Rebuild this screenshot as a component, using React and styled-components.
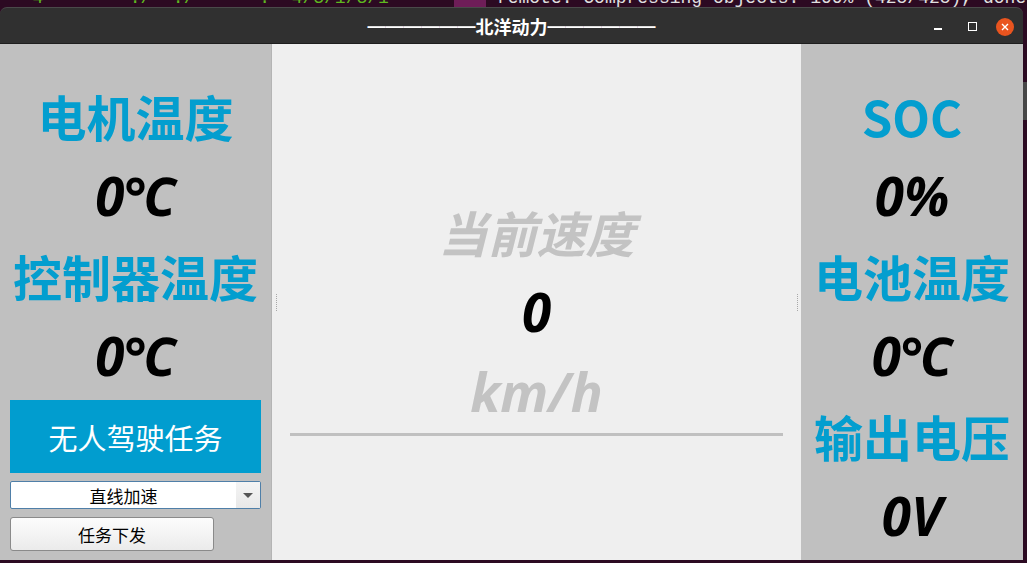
import React from "react";
import styled, { createGlobalStyle } from "styled-components";

const GlobalStyle = createGlobalStyle`
  html, body {
    margin: 0;
    padding: 0;
    background: #2c0a22;
    overflow: hidden;
  }
  * { box-sizing: border-box; }
`;

const BLUE = "#039ecf";
const CJK = `"Noto Sans CJK SC", "Noto Sans", sans-serif`;
const NUM = `"Noto Sans", "Noto Sans CJK SC", sans-serif`;

const Desktop = styled.div`
  width: 1027px;
  height: 563px;
  background: #2c0a22;
  display: flex;
  flex-direction: column;
  overflow: hidden;
`;

const TerminalLine = styled.div`
  height: 7px;
  overflow: hidden;
  display: flex;
  align-items: flex-end;
  font-family: "Liberation Mono", monospace;
  font-size: 18px;
  line-height: 18px;
  white-space: pre;
`;

const Term = styled.span`
  color: ${(p) => p.color || "#e0e0e0"};
  background: ${(p) => p.bg || "transparent"};
`;

const Row = styled.div`
  display: flex;
  flex: 1;
`;

const Window = styled.div`
  width: 1023px;
  display: flex;
  flex-direction: column;
`;

const SideStrip = styled.div`
  flex: 1;
  display: flex;
  flex-direction: column;
  padding-top: 75px;
`;

const SideBlock = styled.div`
  height: 38px;
  background: #474747;
`;

const TitleBar = styled.div`
  height: 37px;
  background: #303030;
  border-top: 1px solid #4a4a4a;
  border-bottom: 1px solid #1e1e1e;
  border-radius: 7px 7px 0 0;
  display: grid;
  grid-template-columns: 1fr auto 1fr;
  align-items: center;
`;

const Title = styled.div`
  grid-column: 2;
  display: flex;
  align-items: center;
  color: #ffffff;
  font-family: ${CJK};
  font-weight: 700;
  font-size: 18px;
  line-height: 20px;
  padding-top: 1px;
  white-space: nowrap;
`;

const Dashes = styled.span`
  font-family: "Liberation Sans", sans-serif;
  font-weight: 700;
  font-size: 18px;
  letter-spacing: 0;
`;

const Controls = styled.div`
  grid-column: 3;
  justify-self: end;
  display: flex;
  align-items: center;
  gap: 14px;
  padding-right: 9px;
  padding-top: 2px;
`;

const CtrlBtn = styled.div`
  width: 20px;
  height: 20px;
  display: flex;
  align-items: center;
  justify-content: center;
`;

const MinLine = styled.div`
  width: 8px;
  height: 2px;
  background: #ffffff;
  margin-top: 5px;
`;

const MaxBox = styled.div`
  width: 9px;
  height: 9px;
  border: 1.5px solid #ffffff;
  margin-top: -1px;
`;

const CloseBtn = styled.div`
  width: 18px;
  height: 18px;
  border-radius: 50%;
  background: #e9541f;
  display: flex;
  align-items: center;
  justify-content: center;
`;

const Body = styled.div`
  height: 516px;
  display: flex;
`;

const SidePanel = styled.div`
  width: ${(p) => p.w}px;
  background: #c0c0c0;
  display: flex;
  flex-direction: column;
  align-items: stretch;
  padding-top: ${(p) => p.top}px;
`;

const Label = styled.div`
  height: 80px;
  display: flex;
  align-items: center;
  justify-content: center;
  color: ${BLUE};
  font-family: ${CJK};
  font-weight: 700;
  font-size: 49px;
  white-space: nowrap;
`;

const Value = styled.div`
  height: 80px;
  display: flex;
  align-items: center;
  justify-content: center;
  color: ${(p) => p.color || "#000000"};
  font-family: ${NUM};
  font-weight: 700;
  font-style: italic;
  font-size: 53px;
  white-space: nowrap;
`;

const TaskBanner = styled.div`
  margin: 5px 10px 0 10px;
  height: 73px;
  background: #019dcf;
  color: #ffffff;
  font-family: ${CJK};
  font-size: 29px;
  display: flex;
  align-items: center;
  justify-content: center;
`;

const Combo = styled.div`
  margin: 8px 10px 0 10px;
  height: 28px;
  background: #ffffff;
  border: 1px solid #4f7fa8;
  border-radius: 2px;
  display: flex;
`;

const ComboText = styled.div`
  flex: 1;
  display: flex;
  align-items: center;
  justify-content: center;
  font-family: ${CJK};
  font-size: 17px;
  color: #000;
`;

const ComboArrow = styled.div`
  width: 24px;
  background: linear-gradient(#f4f4f4, #e8e8e8);
  display: flex;
  align-items: center;
  justify-content: center;
`;

const Triangle = styled.div`
  width: 0;
  height: 0;
  border-left: 5px solid transparent;
  border-right: 5px solid transparent;
  border-top: 5px solid #555555;
`;

const PushButton = styled.div`
  margin: 8px 0 0 10px;
  width: 204px;
  height: 34px;
  border: 1px solid #8a8a8a;
  border-radius: 3px;
  background: linear-gradient(#fcfcfc, #ebebeb);
  display: flex;
  align-items: center;
  justify-content: center;
  font-family: ${CJK};
  font-size: 17px;
  color: #000;
`;

const Center = styled.div`
  flex: 1;
  background: #efefef;
  border-left: 1px solid #b4b4b4;
  display: flex;
`;

const Handle = styled.div`
  width: 8px;
  display: flex;
  align-items: center;
  justify-content: center;
`;

const Dots = styled.div`
  height: 17px;
  border-left: 1px dotted #a8a8a8;
`;

const CenterContent = styled.div`
  flex: 1;
  display: flex;
  flex-direction: column;
  padding-top: 147px;
`;

const SpeedTitle = styled(Label)`
  color: #c3c3c3;
  font-style: italic;
`;

const Divider = styled.div`
  height: 3px;
  background: #c0c0c0;
  margin: 2px 10px 0 10px;
`;

export default function App() {
  return (
    <Desktop>
      <GlobalStyle />
      <TerminalLine>
        <Term color="#5fb820">{"   4    "}</Term>
        <Term color="#5fb820">{"    ./  ./  "}</Term>
        <Term color="#5fb820">{"    .  4/3/1/3/1      "}</Term>
        <Term bg="#6e1d58">{"   "}</Term>
        <Term>{" remote: Compressing objects: 100% (425/425), done."}</Term>
      </TerminalLine>
      <Row>
        <Window>
          <TitleBar>
            <Title>
              <Dashes>——————</Dashes>
              北洋动力
              <Dashes>——————</Dashes>
            </Title>
            <Controls>
              <CtrlBtn>
                <MinLine />
              </CtrlBtn>
              <CtrlBtn>
                <MaxBox />
              </CtrlBtn>
              <CloseBtn>
                <svg width="8" height="8" viewBox="0 0 8 8">
                  <path d="M1 1L7 7M7 1L1 7" stroke="#fff" strokeWidth="1.4" />
                </svg>
              </CloseBtn>
            </Controls>
          </TitleBar>
          <Body>
            <SidePanel w={271} top={31}>
              <Label>电机温度</Label>
              <Value>0℃</Value>
              <Label>控制器温度</Label>
              <Value>0℃</Value>
              <TaskBanner>无人驾驶任务</TaskBanner>
              <Combo>
                <ComboText>直线加速</ComboText>
                <ComboArrow>
                  <Triangle />
                </ComboArrow>
              </Combo>
              <PushButton>任务下发</PushButton>
            </SidePanel>
            <Center>
              <Handle>
                <Dots />
              </Handle>
              <CenterContent>
                <SpeedTitle>当前速度</SpeedTitle>
                <Value>0</Value>
                <Value color="#c3c3c3">km/h</Value>
                <Divider />
              </CenterContent>
              <Handle>
                <Dots />
              </Handle>
            </Center>
            <SidePanel w={222} top={31}>
              <Label>SOC</Label>
              <Value>0%</Value>
              <Label>电池温度</Label>
              <Value>0℃</Value>
              <Label>输出电压</Label>
              <Value>0V</Value>
            </SidePanel>
          </Body>
        </Window>
        <SideStrip>
          <SideBlock />
        </SideStrip>
      </Row>
    </Desktop>
  );
}
